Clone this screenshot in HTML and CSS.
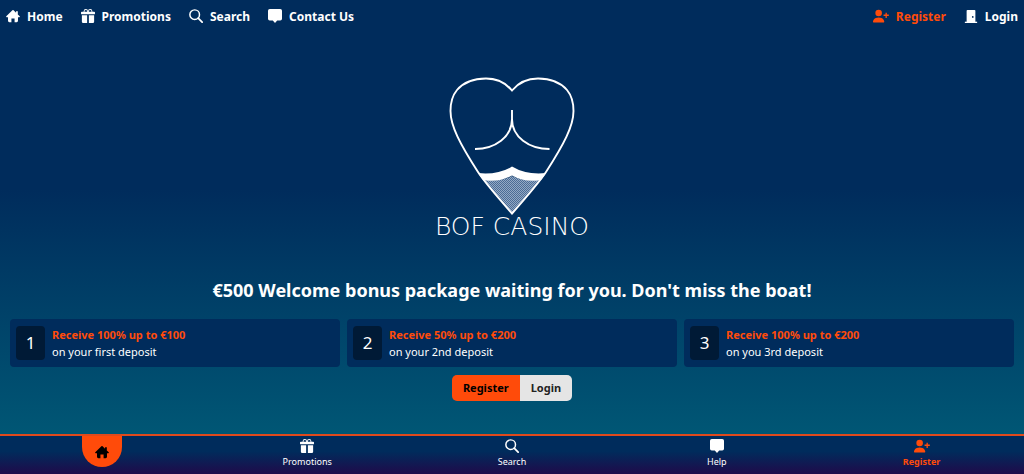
FILE: index.html
```
<!DOCTYPE html>
<html lang="en">
<head>
	<meta charset="utf-8">
	<meta name="viewport" content="width=device-width, initial-scale=1">
	<title>BOF Casino</title>
	<link rel="stylesheet" href="styles.css">
</head>
<body>
	<!-- icons used in both menus -->
	<svg class="sprite" aria-hidden="true">
		<symbol id="i-home" viewBox="0 0 16 16">
			<path d="M8.700 1.500a1 1 0 0 0-1.400 0L.3 8.300a.6.6 0 0 0 .4 1h1.600v4.200A1.500 1.500 0 0 0 3.800 15H6.200v-4.200h3.600V15h2.400a1.500 1.500 0 0 0 1.500-1.500V9.300h1.600a.6.6 0 0 0 .4-1L13.500 6.200V2.500h-2v1.700z"/>
		</symbol>
		<symbol id="i-gift" viewBox="0 0 16 16">
			<path d="M3 2.500a2.500 2.500 0 0 1 5 0 2.500 2.500 0 0 1 5 0v.006c0 .07 0 .27-.038.494H15a1 1 0 0 1 1 1v1a1 1 0 0 1-1 1H1a1 1 0 0 1-1-1V4a1 1 0 0 1 1-1h2.038A3 3 0 0 1 3 2.506zm1.068.5H7v-.5a1.500 1.500 0 1 0-3 0c0 .085.002.274.045.43zM9 3h2.932l.023-.07c.043-.156.045-.345.045-.43a1.500 1.500 0 0 0-3 0zm6 4v7.500a1.500 1.500 0 0 1-1.500 1.500H9V7zM2.500 16A1.500 1.500 0 0 1 1 14.500V7h6v9z"/>
		</symbol>
		<symbol id="i-search" viewBox="0 0 16 16">
			<path d="M10.500 10.500L15 15" fill="none" stroke="currentColor" stroke-width="2" stroke-linecap="round"/>
			<circle cx="6.500" cy="6.500" r="5.500" fill="none" stroke="currentColor" stroke-width="1.700"/>
		</symbol>
		<symbol id="i-chat" viewBox="0 0 16 16">
			<path d="M2 0a2 2 0 0 0-2 2v9a2 2 0 0 0 2 2h3.500L8 16l2.500-3H14a2 2 0 0 0 2-2V2a2 2 0 0 0-2-2z"/>
		</symbol>
		<symbol id="i-user" viewBox="0 0 17 14">
			<path d="M1 14s-1 0-1-1 1-4.500 6-4.500 6 3.500 6 4.500-1 1-1 1zM6 7.300a3.500 3.500 0 1 0 0-7 3.500 3.500 0 0 0 0 7M13.300 3.500v2H11.200v1.400h2.100V9h1.400V6.900h2.100V5.500h-2.100v-2z"/>
		</symbol>
		<symbol id="i-door" viewBox="0 0 16 16">
			<path d="M12 1a1 1 0 0 1 1 1v13h1.500a.5.5 0 0 1 0 1h-13a.5.5 0 0 1 0-1H3V2a1 1 0 0 1 1-1zM10 10a1 1 0 1 0 0-2 1 1 0 0 0 0 2"/>
			<path d="M1 14.500h14V16H1z"/>
		</symbol>
	</svg>

	<header class="topbar">
		<nav class="menu">
			<a class="menu-link" href="#"><svg class="icon"><use href="#i-home"/></svg>Home</a>
			<a class="menu-link" href="#"><svg class="icon"><use href="#i-gift"/></svg>Promotions</a>
			<a class="menu-link" href="#"><svg class="icon"><use href="#i-search"/></svg>Search</a>
			<a class="menu-link" href="#"><svg class="icon"><use href="#i-chat"/></svg>Contact Us</a>
		</nav>
		<nav class="menu">
			<a class="menu-link accent" href="#"><svg class="icon icon-user"><use href="#i-user"/></svg>Register</a>
			<a class="menu-link" href="#"><svg class="icon"><use href="#i-door"/></svg>Login</a>
		</nav>
	</header>

	<main class="main">
		<div class="logo">
			<svg class="logo-mark" viewBox="34 11 128 140" aria-hidden="true">
				<defs>
					<pattern id="net" width="2" height="2" patternUnits="userSpaceOnUse">
						<rect width="2" height="2" fill="#4a6c96"/>
						<rect width="1" height="1" fill="#93a9c4"/>
						<rect x="1" y="1" width="1" height="1" fill="#93a9c4"/>
					</pattern>
				</defs>
				<path d="M69 115Q86 117 98 111Q110 117 127 115L98 148Z" fill="url(#net)"/>
				<path d="M64 108Q84 110 98 101.500Q112 110 132 108L127 115Q111 118 98 110.500Q85 118 69 115Z" fill="#fff"/>
				<g fill="none" stroke="#fff" stroke-width="1.900">
					<path d="M98 25.500C91 17 82 13.500 72 13.500C59 13.500 49 18 43 25C38 31 36.500 38 36.500 46C36.500 61 46 79 64 107Q72 119 98 148.500Q124 119 132 107C150 79 159.500 61 159.500 46C159.500 38 158 31 153 25C147 18 137 13.500 124 13.500C114 13.500 105 17 98 25.500Z"/>
					<path d="M98 45V54C98 72 81 84 61 84M98 54C98 72 115 84 135.500 84"/>
				</g>
			</svg>
			<span class="logo-text">BOF CASINO</span>
		</div>

		<h1 class="title">€500 Welcome bonus package waiting for you. Don't miss the boat!</h1>

		<div class="cards">
			<div class="card">
				<span class="number">1</span>
				<div class="card-text"><strong class="accent">Receive 100% up to €100</strong><span>on your first deposit</span></div>
			</div>
			<div class="card">
				<span class="number">2</span>
				<div class="card-text"><strong class="accent">Receive 50% up to €200</strong><span>on your 2nd deposit</span></div>
			</div>
			<div class="card">
				<span class="number">3</span>
				<div class="card-text"><strong class="accent">Receive 100% up to €200</strong><span>on you 3rd deposit</span></div>
			</div>
		</div>

		<div class="buttons">
			<button type="button" class="button button-register">Register</button>
			<button type="button" class="button">Login</button>
		</div>
	</main>

	<nav class="bottombar">
		<a class="tab" href="#" aria-label="Home"><span class="tab-home"><svg class="icon icon-home"><use href="#i-home"/></svg></span></a>
		<a class="tab" href="#"><svg class="icon"><use href="#i-gift"/></svg>Promotions</a>
		<a class="tab" href="#"><svg class="icon"><use href="#i-search"/></svg>Search</a>
		<a class="tab" href="#"><svg class="icon"><use href="#i-chat"/></svg>Help</a>
		<a class="tab tab-register accent" href="#"><svg class="icon icon-user"><use href="#i-user"/></svg>Register</a>
	</nav>
</body>
</html>
```
FILE: styles.css
```
*{
	box-sizing: border-box;
}
body{
	margin: 0;
	min-height: 100vh;
	display: flex;
	flex-direction: column;
	font: 11px/17px "Noto Sans", "Open Sans", sans-serif;
	color: #fff;
	background: linear-gradient(#002c5c 40%, #005775 92%);
}
a{
	color: inherit;
	text-decoration: none;
}
.sprite{
	display: none;
}
.icon{
	width: 14px;
	height: 14px;
	fill: currentColor;
}
.icon-user{
	width: 16px;
}
.icon-home{
	width: 16px;
}
.accent{
	color: #ff4b0a;
}

/* top menu */
.topbar{
	display: flex;
	justify-content: space-between;
	height: 32px;
	padding: 0 6px;
}
.menu{
	display: flex;
	gap: 18px;
}
.menu-link{
	display: flex;
	align-items: center;
	gap: 7px;
	font-size: 12px;
	font-weight: 700;
}

/* content */
.main{
	flex: 1;
	display: flex;
	flex-direction: column;
	padding: 44px 10px 0;
}
.logo{
	display: flex;
	flex-direction: column;
	align-items: center;
}
.logo-mark{
	width: 128px;
	height: 140px;
}
.logo-text{
	font: 200 25px/22px "DejaVu Sans", sans-serif;
}
.title{
	margin: 38px 0 15px;
	font-size: 18px;
	line-height: 28px;
	text-align: center;
}
.cards{
	display: grid;
	grid-template-columns: repeat(3, 1fr);
	gap: 7px;
}
.card{
	display: flex;
	align-items: center;
	gap: 7px;
	padding: 7px 6px;
	border-radius: 4px;
	background: #002c5c;
}
.number{
	width: 29px;
	border-radius: 4px;
	background: #001a36;
	font-size: 17px;
	line-height: 34px;
	text-align: center;
}
.card-text{
	display: flex;
	flex-direction: column;
}
.buttons{
	display: flex;
	align-self: center;
	margin: 8px 0;
	border-radius: 5px;
	overflow: hidden;
}
.button{
	padding: 4px 11px;
	border: 0;
	background: #e5e5e5;
	color: #222;
	font: 700 11px/18px "Noto Sans", "Open Sans", sans-serif;
	cursor: pointer;
}
.button-register{
	background: #ff4b0a;
	color: #000;
}

/* bottom menu */
.bottombar{
	display: grid;
	grid-template-columns: repeat(5, 1fr);
	height: 40px;
	border-top: 2px solid #e04a1c;
	background: linear-gradient(#002c5c 40%, #1f0a4a);
}
.tab{
	display: flex;
	flex-direction: column;
	align-items: center;
	gap: 2px;
	padding-top: 3px;
	font-size: 9px;
	line-height: 14px;
}
.tab:first-child{
	padding-top: 0;
}
.tab-home{
	display: flex;
	align-items: center;
	justify-content: center;
	width: 40px;
	height: 31px;
	border-radius: 0 0 20px 20px;
	background: #ff4b0a;
	color: #000;
}
.tab-register{
	font-weight: 700;
}
```
